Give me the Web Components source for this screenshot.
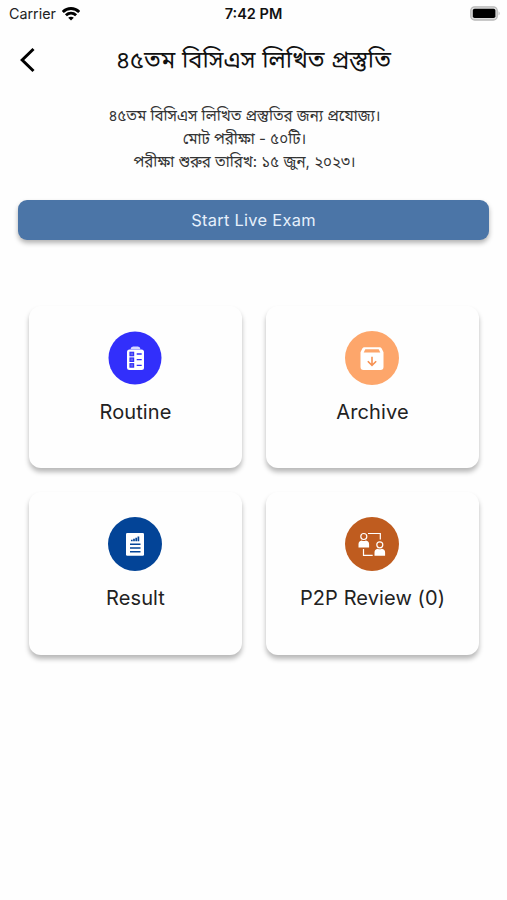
<!DOCTYPE html>
<html lang="bn">
<head>
<meta charset="utf-8">
<title>৪৫তম বিসিএস লিখিত প্রস্তুতি</title>
<style>
  html, body {
    margin: 0;
    background: #fefefe;
  }
</style>
</head>
<body>
<exam-page></exam-page>

<script>
const define = (name, html, setup) => {
  const template = document.createElement('template');
  template.innerHTML = html;

  customElements.define(name, class extends HTMLElement {
    constructor() {
      super();
      this.attachShadow({ mode: 'open' });
      this.shadowRoot.appendChild(template.content.cloneNode(true));
    }

    connectedCallback() {
      if (setup) setup(this);
    }
  });
};

define('status-bar', `
<style>
  :host {
    display: grid;
    grid-template-columns: 1fr auto 1fr;
    align-items: center;
    height: 27px;
    padding: 0 6px 0 9px;
    font: 14.3px/20px Inter, sans-serif;
    color: #222;
  }
  .carrier {
    display: flex;
    align-items: center;
    gap: 6px;
  }
  .time {
    margin-right: 3px;
    font-weight: 600;
    font-size: 14.5px;
    color: #111;
  }
  .battery {
    justify-self: end;
  }
  svg {
    display: block;
  }
</style>
<div class="carrier">
  <span>Carrier</span>
  <svg width="18" height="14" viewBox="0 0 18 14" fill="none" stroke="#000" stroke-width="2.9">
    <path d="M.8 5C5.4.4 12.600.4 17.200 5"/>
    <path d="M3.9 8.3c3-2.8 7.200-2.8 10.200 0"/>
    <path d="M9 13.600 6.200 10.800c1.500-1.500 4.100-1.500 5.600 0z" fill="#000" stroke="none"/>
  </svg>
</div>
<span class="time">7:42 PM</span>
<svg class="battery" width="31" height="15" viewBox="0 0 31 15">
  <rect x=".8" y=".8" width="26.400" height="13.200" rx="3.800" fill="#ddd" stroke="#b8b8b8" stroke-width="1.300"/>
  <rect x="2.800" y="2.700" width="22.600" height="9.400" rx="1.800"/>
  <path d="M28.600 5.200q2 2.200 0 4.400z" fill="#b3b3b3"/>
</svg>
`);

define('nav-bar', `
<style>
  :host {
    display: grid;
    grid-template-columns: 50px 1fr 50px;
    align-items: center;
    height: 65px;
    font: 23.7px/34px Inter, "Noto Sans Bengali", sans-serif;
    color: #111;
  }
  svg {
    display: block;
    margin-left: 19px;
  }
  .title {
    text-align: center;
    white-space: nowrap;
  }
</style>
<svg width="18" height="26" viewBox="0 0 18 26" fill="none" stroke="#000" stroke-width="3">
  <path d="M14.500 2 3.200 13l11.300 11"/>
</svg>
<span class="title"><slot></slot></span>
`);

define('live-button', `
<style>
  :host {
    display: flex;
    align-items: center;
    justify-content: center;
    height: 40px;
    border-radius: 9px;
    background: #4b75a7;
    box-shadow: 0 3px 5px rgba(0, 0, 0, .3);
    font: 16.4px/20px Inter, sans-serif;
    letter-spacing: .3px;
    color: #e6f0fc;
  }
</style>
<slot></slot>
`);

define('menu-card', `
<style>
  :host {
    display: flex;
    flex-direction: column;
    align-items: center;
    box-sizing: border-box;
    height: 162.5px;
    padding-top: 25px;
    border-radius: 12px;
    background: #fefefe;
    box-shadow: 0 4px 5px rgba(0, 0, 0, .28);
    font: 20px/26px Inter, sans-serif;
    letter-spacing: .1px;
    color: #222;
  }
  .label {
    margin-top: 14px;
    white-space: nowrap;
  }
  ::slotted(svg) {
    display: block;
    width: 54px;
    height: 54px;
    margin-right: 1px;
  }
</style>
<slot name="icon"></slot>
<span class="label"></span>
`, el => {
  el.shadowRoot.querySelector('.label').textContent = el.getAttribute('label');
});

define('exam-page', `
<style>
  :host {
    display: flex;
    flex-direction: column;
    height: 900px;
    overflow: hidden;
  }
  .info {
    margin-top: 12px;
    padding-right: 18px;
    text-align: center;
    font: 15.1px/23px Inter, "Noto Sans Bengali", sans-serif;
    color: #333;
  }
  .info div {
    white-space: nowrap;
  }
  live-button {
    margin: 27px 18px 0;
  }
  .grid {
    display: grid;
    grid-template-columns: 1fr 1fr;
    gap: 24px;
    margin: 65.5px 28px 0 29px;
  }
</style>
<status-bar></status-bar>
<nav-bar>৪৫তম বিসিএস লিখিত প্রস্তুতি</nav-bar>
<div class="info">
  <div>৪৫তম বিসিএস লিখিত প্রস্তুতির জন্য প্রযোজ্য।</div>
  <div>মোট পরীক্ষা - ৫০টি।</div>
  <div>পরীক্ষা শুরুর তারিখ: ১৫ জুন, ২০২৩।</div>
</div>
<live-button>Start Live Exam</live-button>
<div class="grid">
  <menu-card label="Routine">
    <svg slot="icon" viewBox="0 0 54 54">
      <circle cx="27" cy="27" r="26.500" fill="#322ffb"/>
      <path d="M22.500 18.200q.3-2.600 2.600-2.600h4.800q2.300 0 2.600 2.600z" fill="#d8d8ff"/>
      <rect x="19" y="18.500" width="17" height="20.500" rx="2.500" fill="#fff"/>
      <g fill="#6765ee" stroke="#322ffb" stroke-width="1.200">
        <rect x="22" y="21.300" width="3.600" height="3.400"/>
        <rect x="22" y="27" width="3.600" height="3.400"/>
        <rect x="22" y="32.700" width="3.600" height="3.400"/>
      </g>
      <path d="M28.700 23h5M28.700 28.700h5M28.700 34.400h5" stroke="#322ffb" stroke-width="1.300"/>
    </svg>
  </menu-card>
  <menu-card label="Archive">
    <svg slot="icon" viewBox="0 0 54 54">
      <circle cx="27" cy="27" r="27" fill="#fda66b"/>
      <path d="M19.500 16.200h15q1.500 0 2.200 1.400l1.800 3.600V36q0 3-3 3h-17q-3 0-3-3V21.200l1.800-3.600q.7-1.400 2.200-1.400z" fill="#fff"/>
      <path d="M20.300 18.200h13.400l1.600 3.200H18.700z" fill="#fda66b"/>
      <path d="M27 25.800v8.200M22.800 30.200 27 34.300l4.200-4.100" fill="none" stroke="#f69254" stroke-width="1.600"/>
    </svg>
  </menu-card>
  <menu-card label="Result">
    <svg slot="icon" viewBox="0 0 54 54">
      <circle cx="27" cy="27" r="27" fill="#034497"/>
      <rect x="18" y="16" width="18" height="22.700" rx="1.300" fill="#fff"/>
      <path d="M23.800 24.300v-1.500M26 24.300v-2.500M28.200 24.300v-3.500M30.400 24.300v-4.800" stroke="#034497" stroke-width="1.700"/>
      <path d="M22 27.200h10.500M22 31h10.500M22 34.800h10.500" stroke="#034497" stroke-width="1.500"/>
    </svg>
  </menu-card>
  <menu-card label="P2P Review (0)">
    <svg slot="icon" viewBox="0 0 54 54">
      <circle cx="27" cy="27" r="27" fill="#bf5c1f"/>
      <g fill="none" stroke="#fff" stroke-width="1.200">
        <circle cx="18.800" cy="19.500" r="3"/>
        <circle cx="34.800" cy="27.800" r="3"/>
        <path d="M23 16.500h12.300v6M18.500 32v6.300h9.200"/>
      </g>
      <path d="M13.500 30.500v-3.300q0-3.200 3.200-3.700 2 1 4.200 0 3.200.5 3.200 3.700v3.300z" fill="#fff"/>
      <path d="M29.500 38.800v-3.300q0-3.200 3.200-3.700 2 1 4.200 0 3.200.5 3.200 3.700v3.300z" fill="#fff"/>
    </svg>
  </menu-card>
</div>
`);
</script>
</body>
</html>
